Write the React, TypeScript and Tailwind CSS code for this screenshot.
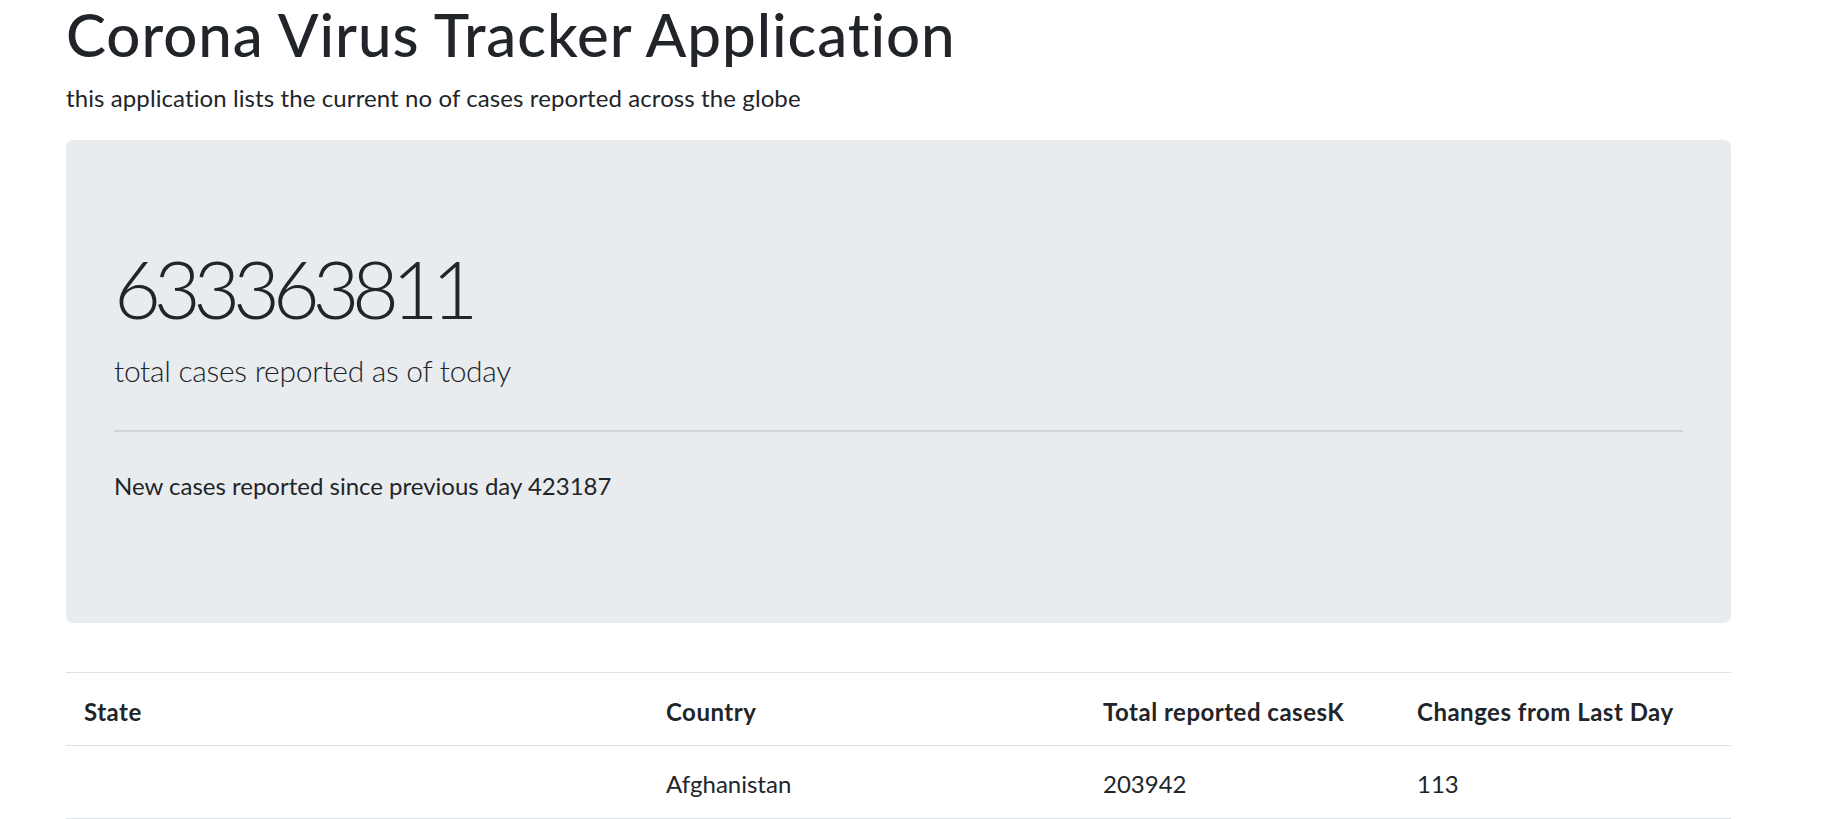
import React from "react";

const rows = [{ state: "", country: "Afghanistan", total: "203942", change: "113" }];

export default function App() {
  return (
    <div className="min-h-screen bg-white text-[#212529]" style={{ fontFamily: '"Lato", "Open Sans", sans-serif' }}>
      <div className="ml-[66px] w-[1665px]">
        <h1 className="text-[60px] font-medium leading-[68px] tracking-[0.95px] mb-3">Corona Virus Tracker Application</h1>
        <p className="text-[24px] leading-[36px] tracking-[0.1px] mb-6">this application lists the current no of cases reported across the globe</p>

        <div className="bg-[#e9ecef] rounded-[7px] px-12 pt-[97.5px] pb-[119px]">
          <h1 className="text-[81px] font-light leading-[100px] tracking-[-7.3px] mb-[10.5px]">633363811</h1>
          <p className="text-[30px] font-light leading-[45px] tracking-[-0.3px]">total cases reported as of today</p>
          <div className="mt-[37px] h-[1.5px] bg-black/10" />
          <p className="mt-9 text-[24px] leading-[36px]">New cases reported since previous day 423187</p>
        </div>

        <table className="mt-[49px] w-full table-fixed border-collapse text-[24px] leading-[36px]">
          <colgroup>
            <col className="w-[582px]" />
            <col className="w-[437px]" />
            <col className="w-[314px]" />
            <col />
          </colgroup>
          <thead>
            <tr className="border-t-[1.5px] border-b-[1.5px] border-[#dee2e6]">
              <th className="px-[18px] pt-[21px] pb-[15px] text-left font-bold tracking-[0.5px]">State</th>
              <th className="px-[18px] pt-[21px] pb-[15px] text-left font-bold tracking-[0.5px]">Country</th>
              <th className="px-[18px] pt-[21px] pb-[15px] text-left font-bold tracking-[0.5px]">Total reported casesK</th>
              <th className="px-[18px] pt-[21px] pb-[15px] text-left font-bold tracking-[0.5px]">Changes from Last Day</th>
            </tr>
          </thead>
          <tbody>
            {rows.map((r) => (
              <tr key={r.country} className="border-b-[1.5px] border-[#dee2e6]">
                <td className="px-[18px] pt-[20px] pb-[16px]">{r.state}</td>
                <td className="px-[18px] pt-[20px] pb-[16px]">{r.country}</td>
                <td className="px-[18px] pt-[20px] pb-[16px]">{r.total}</td>
                <td className="px-[18px] pt-[20px] pb-[16px]">{r.change}</td>
              </tr>
            ))}
          </tbody>
        </table>
      </div>
    </div>
  );
}
